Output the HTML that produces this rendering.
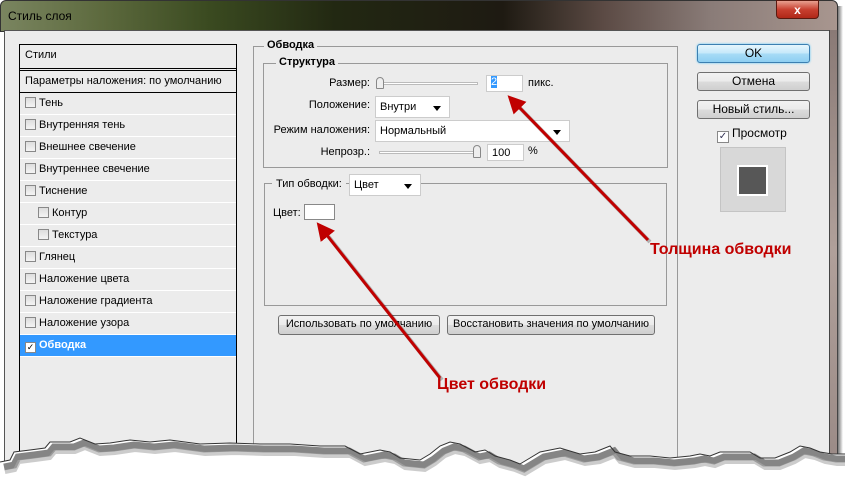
<!DOCTYPE html>
<html><head><meta charset="utf-8"><style>
*{margin:0;padding:0;box-sizing:border-box}
body{width:845px;height:489px;background:#fff;position:relative;overflow:hidden;font-family:"Liberation Sans","DejaVu Sans",sans-serif;font-size:11px;color:#000}
.a{position:absolute}
.title{left:0;top:0;width:838px;height:32px;background:linear-gradient(90deg,#7a8560 0%,#5d6a3e 12%,#3a4a20 25%,#222812 40%,#1e1a12 60%,#5b4a44 72%,#8a7c78 85%,#a8968f 100%);border:1px solid #333;border-radius:6px 6px 0 0}
.body{left:4px;top:30px;width:826px;height:440px;background:#ececec;border:1px solid #555}
.frame{left:829px;top:30px;width:9px;height:440px;background:linear-gradient(180deg,#8a7a76,#b0a09a 50%,#9a8a86);border-left:1px solid #444;border-right:1px solid #444}
.lbox{left:19px;top:44px;width:218px;height:420px;border:1px solid #000;background:#ececec}
.row{position:absolute;left:0;width:216px;height:22px;border-bottom:1px solid #fff;line-height:21px;padding-left:5px}
.cb{display:inline-block;width:11px;height:11px;border:1px solid #888;background:linear-gradient(#ddd,#f4f4f4);vertical-align:-2px;margin-right:3px}
.grp{border:1px solid #999}
.lg{position:absolute;background:#ececec;font-weight:bold;padding:0 3px;top:-8px}
.inp{background:#fff;border:1px solid #ccc}
.dd{background:#fff;border:1px solid #ccc;padding-left:4px;line-height:20px}
.dd:after{content:"";position:absolute;right:8px;top:9px;border:4px solid transparent;border-top:5px solid #000}
.btn{border:1px solid #707070;border-radius:3px;background:linear-gradient(#f2f2f2,#ebebeb 50%,#dcdcdc 51%,#cfcfcf);text-align:center;font-size:12px;line-height:17px}
.red{color:#c00000;font-weight:bold;font-size:16px;font-family:"Liberation Sans Narrow","Liberation Sans",sans-serif}
</style></head><body>
<div class="a" style="left:838px;top:6px;width:5px;height:460px;background:linear-gradient(90deg,#777,#fff)"></div>
<div class="a title"></div>
<div class="a" style="left:8px;top:9px;font-size:12px;color:#000">Стиль слоя</div>
<div class="a" style="left:776px;top:0;width:43px;height:19px;background:linear-gradient(#e8a090,#c84030 50%,#b02818);border:1px solid #5a1a10;border-radius:0 0 4px 4px;color:#fff;font-weight:bold;text-align:center;line-height:18px;font-size:12px">x</div>
<div class="a body"></div>
<div class="a frame"></div>

<div class="a lbox">
 <div class="row" style="top:0;border-bottom:3px double #000;height:26px">Стили</div>
 <div class="row" style="top:26px;border-bottom:1px solid #000">Параметры наложения: по умолчанию</div>
 <div class="row" style="top:48px"><span class="cb"></span>Тень</div>
 <div class="row" style="top:70px"><span class="cb"></span>Внутренняя тень</div>
 <div class="row" style="top:92px"><span class="cb"></span>Внешнее свечение</div>
 <div class="row" style="top:114px"><span class="cb"></span>Внутреннее свечение</div>
 <div class="row" style="top:136px"><span class="cb"></span>Тиснение</div>
 <div class="row" style="top:158px;padding-left:18px"><span class="cb"></span>Контур</div>
 <div class="row" style="top:180px;padding-left:18px"><span class="cb"></span>Текстура</div>
 <div class="row" style="top:202px"><span class="cb"></span>Глянец</div>
 <div class="row" style="top:224px"><span class="cb"></span>Наложение цвета</div>
 <div class="row" style="top:246px"><span class="cb"></span>Наложение градиента</div>
 <div class="row" style="top:268px"><span class="cb"></span>Наложение узора</div>
 <div class="row" style="top:290px;background:#3399ff;color:#fff;font-weight:bold"><span class="cb" style="background:#fff;color:#000;font-size:9px;line-height:9px;text-align:center">✓</span>Обводка</div>
</div>

<div class="a grp" style="left:253px;top:46px;width:425px;height:420px"><span class="lg" style="left:10px">Обводка</span></div>
<div class="a grp" style="left:263px;top:63px;width:405px;height:105px"><span class="lg" style="left:12px">Структура</span></div>
<div class="a" style="left:320px;top:77px;width:50px;text-align:right">Размер:</div>
<div class="a" style="left:378px;top:82px;width:100px;height:3px;border:1px solid #bbb;background:#fff"></div>
<div class="a" style="left:376px;top:77px;width:8px;height:12px;border:1px solid #888;border-radius:4px 4px 1px 1px;background:#eee"></div>
<div class="a inp" style="left:486px;top:75px;width:37px;height:17px"><span style="background:#3399ff;color:#fff;margin-left:4px">2</span></div>
<div class="a" style="left:528px;top:77px">пикс.</div>
<div class="a" style="left:300px;top:99px;width:70px;text-align:right">Положение:</div>
<div class="a dd" style="left:375px;top:96px;width:75px;height:22px">Внутри</div>
<div class="a" style="left:270px;top:124px;width:100px;text-align:right">Режим наложения:</div>
<div class="a dd" style="left:375px;top:120px;width:195px;height:22px">Нормальный</div>
<div class="a" style="left:300px;top:146px;width:70px;text-align:right">Непрозр.:</div>
<div class="a" style="left:379px;top:151px;width:100px;height:3px;border:1px solid #bbb;background:#fff"></div>
<div class="a" style="left:473px;top:145px;width:8px;height:13px;border:1px solid #888;border-radius:4px 4px 1px 1px;background:#eee"></div>
<div class="a inp" style="left:487px;top:144px;width:37px;height:17px;padding-left:4px;line-height:16px">100</div>
<div class="a" style="left:528px;top:145px">%</div>

<div class="a grp" style="left:264px;top:183px;width:403px;height:123px"></div>
<div class="a" style="left:272px;top:176px;background:#ececec;padding:0 4px;line-height:16px">Тип обводки:</div>
<div class="a dd" style="left:349px;top:174px;width:72px;height:22px">Цвет</div>
<div class="a" style="left:273px;top:207px">Цвет:</div>
<div class="a" style="left:304px;top:204px;width:31px;height:16px;background:#fff;border:1px solid #888"></div>
<div class="a btn" style="left:278px;top:315px;width:162px;height:20px;font-size:11px">Использовать по умолчанию</div>
<div class="a btn" style="left:447px;top:315px;width:208px;height:20px;font-size:11px">Восстановить значения по умолчанию</div>

<div class="a btn" style="left:697px;top:44px;width:113px;height:19px;border-color:#3c7fb1;background:linear-gradient(#e6f6fd,#c4e8fa 50%,#a8dcf6 51%,#8ecff2);box-shadow:0 0 2px #5ac8f8">OK</div>
<div class="a btn" style="left:697px;top:72px;width:113px;height:19px">Отмена</div>
<div class="a btn" style="left:697px;top:100px;width:113px;height:19px">Новый стиль...</div>
<div class="a" style="left:717px;top:126px;font-size:12px"><span class="cb" style="width:12px;height:12px;background:#fff;font-size:10px;line-height:10px;text-align:center;color:#335">✓</span>Просмотр</div>
<div class="a" style="left:720px;top:147px;width:66px;height:65px;background:#d8d8d8;border:1px solid #c4c4c4"></div>
<div class="a" style="left:737px;top:165px;width:31px;height:31px;background:#575757;border:2px solid #fff"></div>

<svg class="a" style="left:0;top:0" width="845" height="489">
<defs><marker id="m" markerWidth="6" markerHeight="6" refX="1" refY="3" orient="auto" markerUnits="strokeWidth"><path d="M0,0 L6,3 L0,6 Z" fill="#c00000"/></marker>
<path id="e" d="M0,462 L10,460 14,452 30,450 45,448 50,442 70,442 80,438 95,444 110,443 130,440 150,442 170,440 200,444 230,443 260,444 290,444 320,446 345,446 360,454 370,452 380,450 390,452 400,458 420,460 430,454 440,446 450,442 460,444 475,452 485,450 495,456 510,460 520,464 530,458 540,452 560,448 580,454 595,452 610,446 615,452 630,456 650,456 670,458 690,456 700,454 710,456 720,452 750,452 760,458 775,458 790,452 800,446 810,448 820,452 832,454 845,454"/></defs>
<g stroke="#000" stroke-opacity=".25" stroke-width="4"><line x1="650" y1="242" x2="520" y2="108"/><line x1="442" y1="380" x2="328" y2="236"/></g>
<line x1="648" y1="240" x2="518" y2="106" stroke="#c00000" stroke-width="3" marker-end="url(#m)"/>
<line x1="440" y1="378" x2="326" y2="234" stroke="#c00000" stroke-width="3" marker-end="url(#m)"/>
<path d="M0,489 L0,462 10,460 14,452 30,450 45,448 50,442 70,442 80,438 95,444 110,443 130,440 150,442 170,440 200,444 230,443 260,444 290,444 320,446 345,446 360,454 370,452 380,450 390,452 400,458 420,460 430,454 440,446 450,442 460,444 475,452 485,450 495,456 510,460 520,464 530,458 540,452 560,448 580,454 595,452 610,446 615,452 630,456 650,456 670,458 690,456 700,454 710,456 720,452 750,452 760,458 775,458 790,452 800,446 810,448 820,452 832,454 845,454 845,489 Z" fill="#fff"/>
<use href="#e" fill="none" stroke="#666" stroke-width="7" stroke-opacity=".8" transform="translate(4,5)"/>
<use href="#e" fill="none" stroke="#aaa" stroke-width="4" stroke-opacity=".6" transform="translate(5,10)"/>
<use href="#e" fill="none" stroke="#333" stroke-width="1"/>
</svg>
<div class="a red" style="left:650px;top:241px">Толщина обводки</div>
<div class="a red" style="left:437px;top:376px">Цвет обводки</div>
</body></html>
